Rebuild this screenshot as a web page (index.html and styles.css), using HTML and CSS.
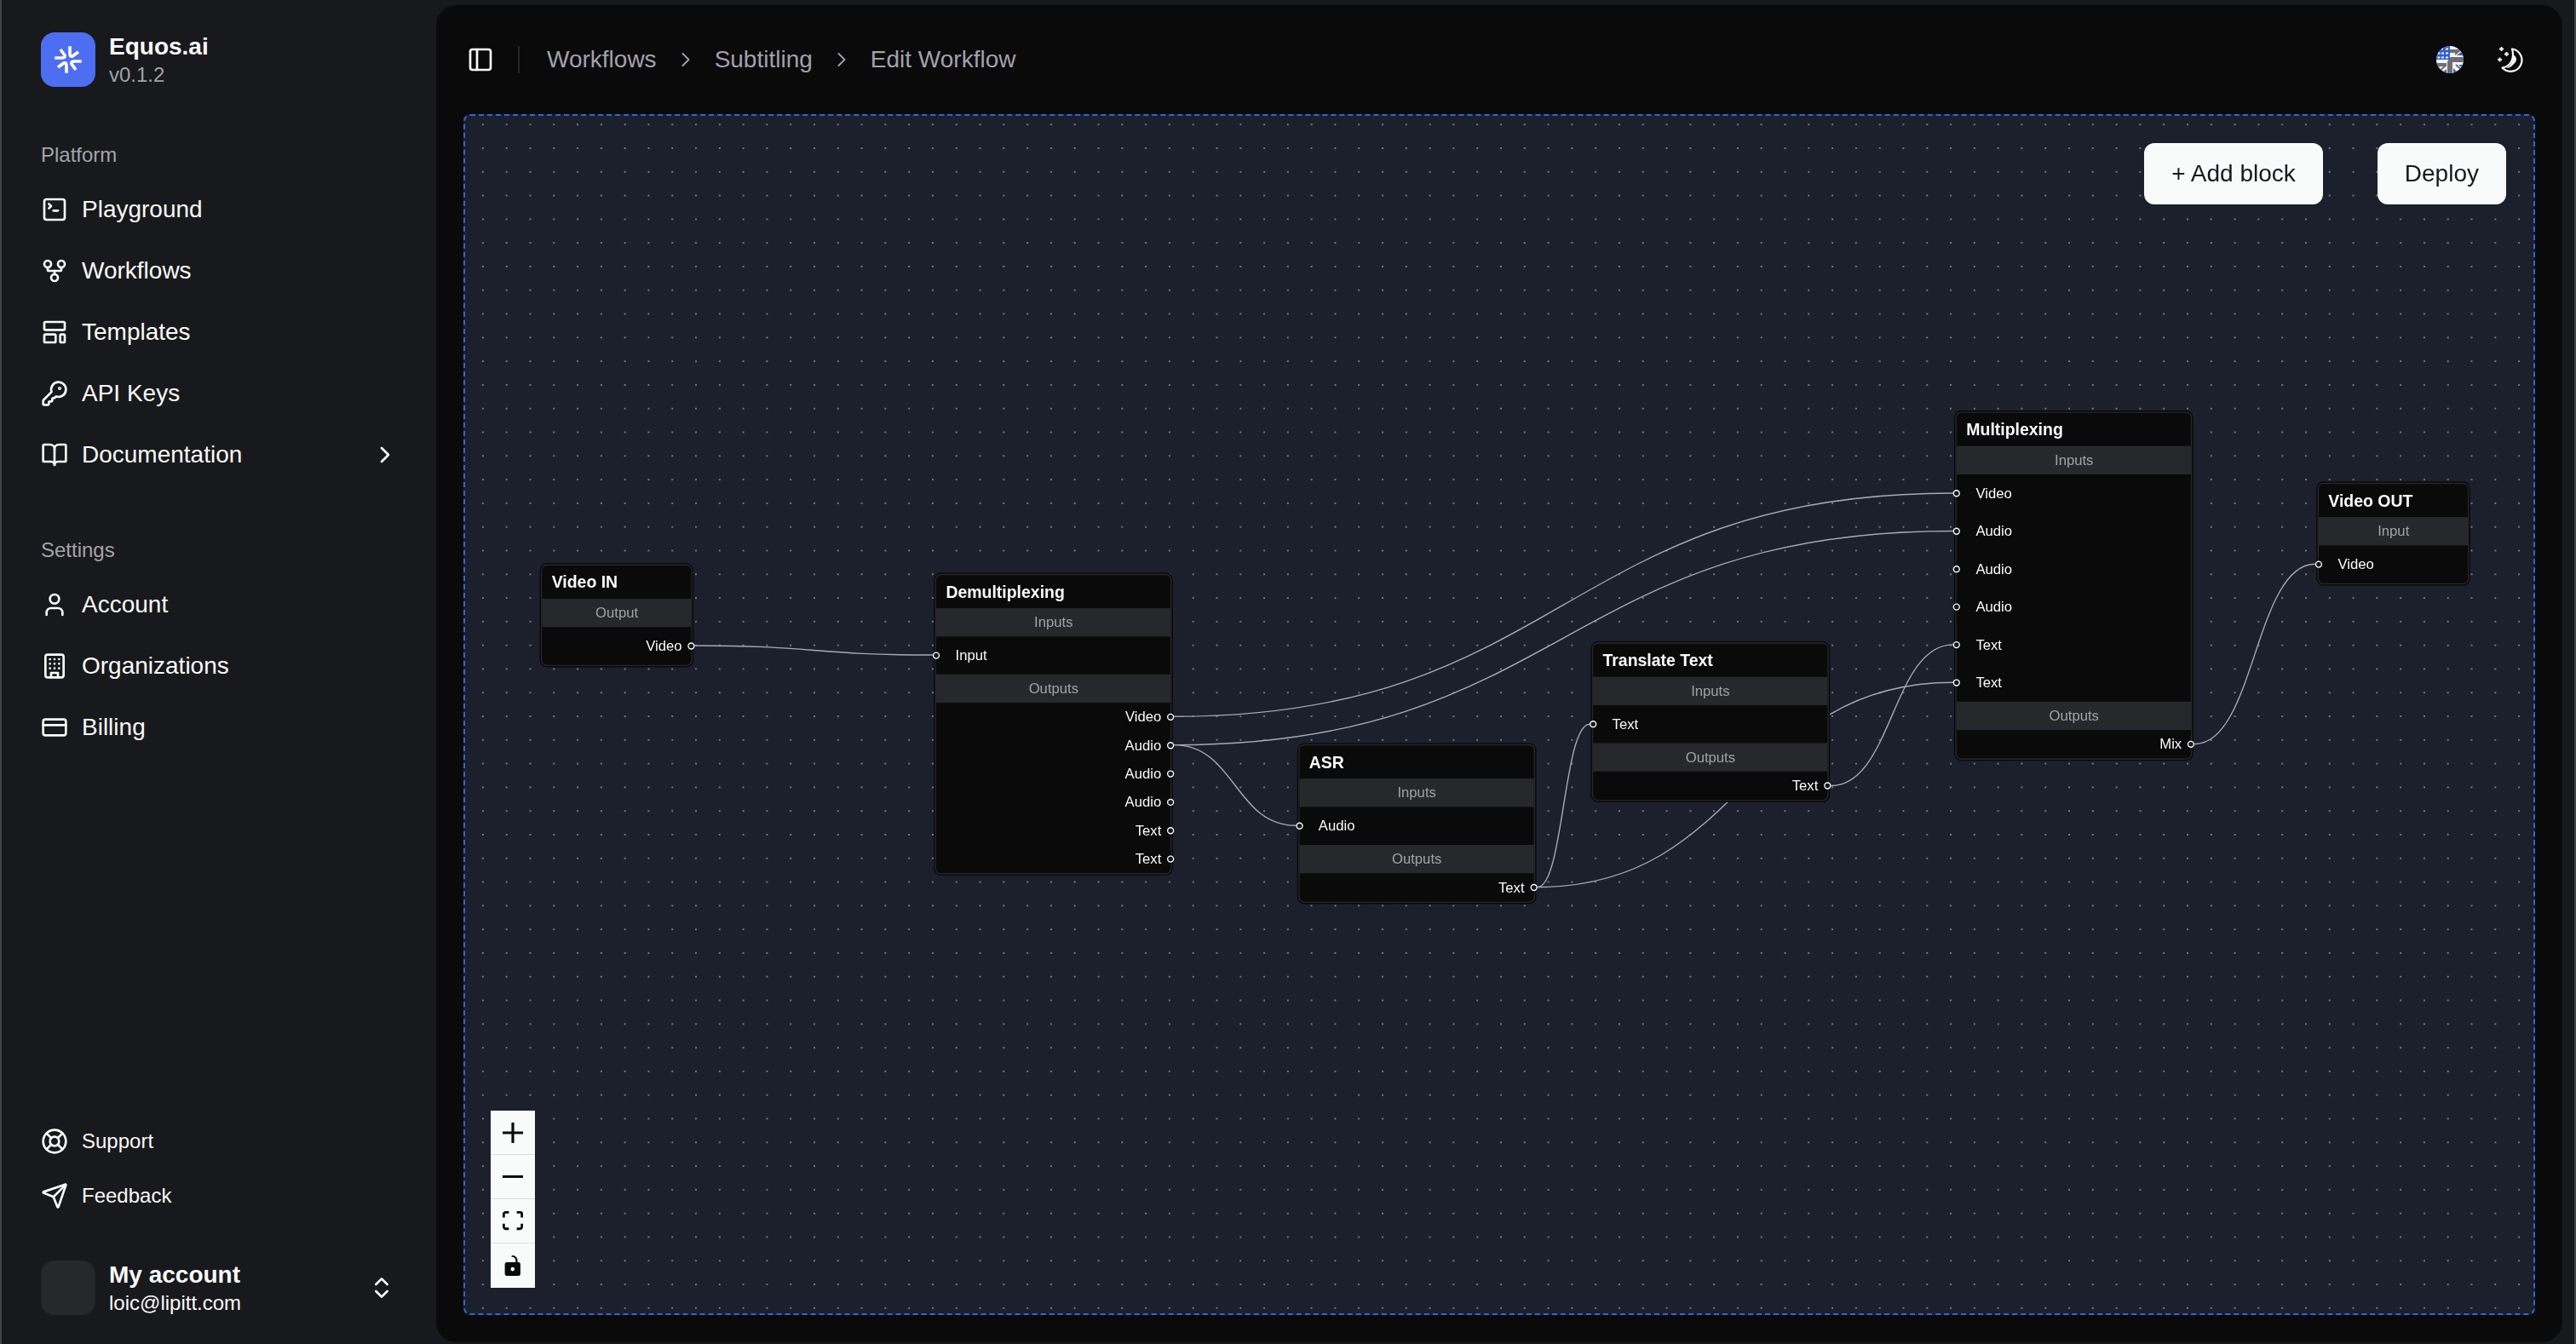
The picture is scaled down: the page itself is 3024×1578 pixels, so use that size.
FILE: index.html
```html
<!DOCTYPE html>
<html lang="en">
<head>
    <meta charset="UTF-8">
    <meta name="viewport" content="width=device-width, initial-scale=1.0">
    <title>Equos.ai - Edit Workflow</title>
    <link rel="stylesheet" href="styles.css">
</head>
<body>
    <div class="app">
        <aside class="sidebar">
            <div class="brand">
                <div class="brand-logo">
                    <svg viewBox="-48 -48 96 96">
                        <path d="M6-47V-22Q6-9 15-12L36-27"/>
                        <path d="M6-47V-22Q6-9 15-12L36-27" transform="rotate(90)"/>
                        <path d="M6-47V-22Q6-9 15-12L36-27" transform="rotate(180)"/>
                        <path d="M6-47V-22Q6-9 15-12L36-27" transform="rotate(270)"/>
                    </svg>
                </div>
                <div class="brand-text">
                    <span class="name">Equos.ai</span>
                    <span class="sub muted">v0.1.2</span>
                </div>
            </div>

            <nav class="nav-group">
                <div class="nav-label">Platform</div>
                <a class="nav-item">
                    <svg class="icon" viewBox="0 0 24 24"><path d="m7 11 2-2-2-2"/><path d="M11 13h4"/><rect x="3" y="3" width="18" height="18" rx="2"/></svg>
                    <span>Playground</span>
                </a>
                <a class="nav-item">
                    <svg class="icon" viewBox="0 0 24 24"><circle cx="12" cy="18" r="3"/><circle cx="6" cy="6" r="3"/><circle cx="18" cy="6" r="3"/><path d="M18 9v2c0 .6-.4 1-1 1H7c-.6 0-1-.4-1-1V9"/><path d="M12 12v3"/></svg>
                    <span>Workflows</span>
                </a>
                <a class="nav-item">
                    <svg class="icon" viewBox="0 0 24 24"><rect x="3" y="3" width="18" height="7" rx="1"/><rect x="3" y="14" width="10" height="7" rx="1"/><rect x="17" y="14" width="4" height="7" rx="1"/></svg>
                    <span>Templates</span>
                </a>
                <a class="nav-item">
                    <svg class="icon" viewBox="0 0 24 24"><path d="M2.586 17.414A2 2 0 0 0 2 18.828V21a1 1 0 0 0 1 1h3a1 1 0 0 0 1-1v-1a1 1 0 0 1 1-1h1a1 1 0 0 0 1-1v-1a1 1 0 0 1 1-1h.172a2 2 0 0 0 1.414-.586l.814-.814a6.5 6.5 0 1 0-4-4z"/><circle cx="16.5" cy="7.5" r=".5" fill="currentColor"/></svg>
                    <span>API Keys</span>
                </a>
                <a class="nav-item">
                    <svg class="icon" viewBox="0 0 24 24"><path d="M12 7v14"/><path d="M3 18a1 1 0 0 1-1-1V4a1 1 0 0 1 1-1h5a4 4 0 0 1 4 4 4 4 0 0 1 4-4h5a1 1 0 0 1 1 1v13a1 1 0 0 1-1 1h-6a3 3 0 0 0-3 3 3 3 0 0 0-3-3z"/></svg>
                    <span>Documentation</span>
                    <svg class="icon nav-more" viewBox="0 0 24 24"><path d="m9 18 6-6-6-6"/></svg>
                </a>
            </nav>

            <nav class="nav-group">
                <div class="nav-label">Settings</div>
                <a class="nav-item">
                    <svg class="icon" viewBox="0 0 24 24"><path d="M19 21v-2a4 4 0 0 0-4-4H9a4 4 0 0 0-4 4v2"/><circle cx="12" cy="7" r="4"/></svg>
                    <span>Account</span>
                </a>
                <a class="nav-item">
                    <svg class="icon" viewBox="0 0 24 24"><rect x="4" y="2" width="16" height="20" rx="2"/><path d="M9 22v-4h6v4"/><path d="M8 6h.01M12 6h.01M16 6h.01M8 10h.01M12 10h.01M16 10h.01M8 14h.01M12 14h.01M16 14h.01"/></svg>
                    <span>Organizations</span>
                </a>
                <a class="nav-item">
                    <svg class="icon" viewBox="0 0 24 24"><rect x="2" y="5" width="20" height="14" rx="2"/><path d="M2 10h20"/></svg>
                    <span>Billing</span>
                </a>
            </nav>

            <nav class="nav-group nav-bottom">
                <a class="nav-item small">
                    <svg class="icon" viewBox="0 0 24 24"><circle cx="12" cy="12" r="10"/><path d="m4.93 4.93 4.24 4.24M14.83 9.17l4.24-4.24M14.83 14.83l4.24 4.24M9.17 14.83l-4.24 4.24"/><circle cx="12" cy="12" r="4"/></svg>
                    <span>Support</span>
                </a>
                <a class="nav-item small">
                    <svg class="icon" viewBox="0 0 24 24"><path d="M14.536 21.686a.5.5 0 0 0 .937-.024l6.5-19a.496.496 0 0 0-.635-.635l-19 6.5a.5.5 0 0 0-.024.937l7.93 3.18a2 2 0 0 1 1.112 1.11z"/><path d="m21.854 2.147-10.94 10.939"/></svg>
                    <span>Feedback</span>
                </a>
            </nav>

            <div class="account">
                <div class="avatar"></div>
                <div class="brand-text">
                    <span class="name">My account</span>
                    <span class="sub">loic@lipitt.com</span>
                </div>
                <svg class="icon" viewBox="0 0 24 24"><path d="m7 15 5 5 5-5"/><path d="m7 9 5-5 5 5"/></svg>
            </div>
        </aside>

        <main class="main">
            <header class="topbar">
                <svg class="icon" viewBox="0 0 24 24"><rect x="3" y="3" width="18" height="18" rx="2"/><path d="M9 3v18"/></svg>
                <div class="divider"></div>
                <div class="breadcrumb">
                    <span>Workflows</span>
                    <svg class="icon" viewBox="0 0 24 24"><path d="m9 18 6-6-6-6"/></svg>
                    <span>Subtitling</span>
                    <svg class="icon" viewBox="0 0 24 24"><path d="m9 18 6-6-6-6"/></svg>
                    <span>Edit Workflow</span>
                </div>
                <div class="topbar-actions">
                    <!-- language -->
                    <svg class="lang" viewBox="0 0 32 32">
                        <clipPath id="flag"><circle cx="16" cy="16" r="16"/></clipPath>
                        <g clip-path="url(#flag)">
                            <rect width="32" height="32" fill="#f4f5f5"/>
                            <path d="M24 11 32 5v6zM0 24h4l-4 4zM6 32l6-5v5zM20 32v-6l6 6zM32 22h-6l6 5z" fill="#315fce"/>
                            <path d="M0 20h12v4H0zM16 4h12l-4 4h-8z" fill="#6e6e73"/>
                            <path d="m4 29 7-6M32 30l-9-8M22 10l8-7" stroke="#6e6e73" stroke-width="2"/>
                            <path d="M13 32V18l4-5h15v6H19v13z" fill="#6e6e73"/>
                            <path d="M0 0h16v16H0z" fill="#315fce"/>
                            <path d="M6 3.500h2M11 3.500h3M1.500 8.500h3M6 8.500h3M11 8.500h3M1.500 13.500h3M6 13.500h3M11 13.500h3" stroke="#f4f5f5" stroke-width="2.200"/>
                        </g>
                    </svg>
                    <!-- theme -->
                    <svg class="theme" viewBox="0 0 32 32">
                        <path d="M19 3.500A13.200 13.200 0 1 1 7.500 25.500C18 24 22 14 19 3.500z" fill="none" stroke="#fafafa" stroke-width="2.200" stroke-linejoin="round"/>
                        <path d="M20 10c4 2 6 7 1 11-3 4-6 5-9 5 6-3 9-9 8-16z" fill="#fafafa"/>
                        <path d="M6.500 1v5M4 3.500h5M12.500 7v5M10 9.500h5M4.500 13.500v5M2 16h5" stroke="#fafafa" stroke-width="1.800"/>
                    </svg>
                </div>
            </header>

            <section class="canvas">
                <svg class="dots">
                    <pattern id="grid" x="7" y="-3.700" width="27.793" height="27.793" patternUnits="userSpaceOnUse">
                        <circle cx="13.900" cy="13.900" r=".95"/>
                    </pattern>
                    <rect width="100%" height="100%" fill="url(#grid)"/>
                </svg>

                <div class="viewport">
                    <svg class="edges">
                        <path d="M194 447.600C294.500 447.600 294.500 455.600 395 455.600"/>
                        <path d="M599 507.600C928 507.600 928 318.800 1257.200 318.800"/>
                        <path d="M599 531.600C928 531.600 928 350.800 1257.200 350.800"/>
                        <path d="M599 531.600C650.500 531.600 650.500 599.700 702 599.700"/>
                        <path d="M906 651.700C928 651.700 928 514 950.100 514"/>
                        <path d="M906 651.700C1081.600 651.700 1081.600 478.800 1257.200 478.800"/>
                        <path d="M1154.100 566C1205.650 566 1205.650 446.800 1257.200 446.800"/>
                        <path d="M1461.200 530.800C1512.100 530.800 1512.100 378.700 1563 378.700"/>
                    </svg>

                    <div class="node narrow" style="left: 64.200px; top: 378.600px">
                        <div class="node-title">Video IN</div>
                        <div class="node-band">Output</div>
                        <div class="port out tall">Video<i></i></div>
                    </div>

                    <div class="node" style="left: 397.200px; top: 386.600px">
                        <div class="node-title">Demultiplexing</div>
                        <div class="node-band">Inputs</div>
                        <div class="port in"><i></i>Input</div>
                        <div class="node-band">Outputs</div>
                        <div class="port out">Video<i></i></div>
                        <div class="port out">Audio<i></i></div>
                        <div class="port out">Audio<i></i></div>
                        <div class="port out">Audio<i></i></div>
                        <div class="port out">Text<i></i></div>
                        <div class="port out">Text<i></i></div>
                    </div>

                    <div class="node" style="left: 704px; top: 530.700px">
                        <div class="node-title">ASR</div>
                        <div class="node-band">Inputs</div>
                        <div class="port in"><i></i>Audio</div>
                        <div class="node-band">Outputs</div>
                        <div class="port out">Text<i></i></div>
                    </div>

                    <div class="node" style="left: 952.100px; top: 445px">
                        <div class="node-title">Translate Text</div>
                        <div class="node-band">Inputs</div>
                        <div class="port in"><i></i>Text</div>
                        <div class="node-band">Outputs</div>
                        <div class="port out">Text<i></i></div>
                    </div>

                    <div class="node" style="left: 1259.300px; top: 249.800px">
                        <div class="node-title">Multiplexing</div>
                        <div class="node-band">Inputs</div>
                        <div class="port in"><i></i>Video</div>
                        <div class="port in"><i></i>Audio</div>
                        <div class="port in"><i></i>Audio</div>
                        <div class="port in"><i></i>Audio</div>
                        <div class="port in"><i></i>Text</div>
                        <div class="port in"><i></i>Text</div>
                        <div class="node-band">Outputs</div>
                        <div class="port out">Mix<i></i></div>
                    </div>

                    <div class="node narrow" style="left: 1565.200px; top: 309.700px">
                        <div class="node-title">Video OUT</div>
                        <div class="node-band">Input</div>
                        <div class="port in"><i></i>Video</div>
                    </div>
                </div>

                <div class="panel-actions">
                    <button class="btn">+ Add block</button>
                    <button class="btn">Deploy</button>
                </div>

                <div class="controls">
                    <button><svg viewBox="0 0 32 32"><path d="M32 18.133H18.133V32h-4.266V18.133H0v-4.266h13.867V0h4.266v13.867H32z"/></svg></button>
                    <button><svg viewBox="0 0 32 5"><path d="M0 0h32v4.200H0z"/></svg></button>
                    <button><svg viewBox="0 0 32 30"><path d="M3.692 4.630c0-.53.4-.938.939-.938h5.215V0H4.708C2.130 0 0 2.054 0 4.630v5.216h3.692V4.631zM27.354 0h-5.200v3.692h5.170c.53 0 .984.4.984.939v5.215H32V4.631A4.624 4.624 0 0027.354 0zm.954 24.830c0 .532-.4.940-.939.940h-5.215v3.768h5.215c2.577 0 4.631-2.130 4.631-4.707v-5.139h-3.692v5.139zm-23.677.940c-.531 0-.939-.4-.939-.940v-5.138H0v5.139c0 2.577 2.130 4.707 4.708 4.707h5.138V25.770H4.631z"/></svg></button>
                    <button><svg viewBox="0 0 25 32"><path d="M21.333 10.667H19.810V7.619C19.810 3.429 16.380 0 12.190 0c-4.114 1.828-1.370 2.133.305 2.438 1.676.305 4.420 2.590 4.420 5.181v3.048H3.047A3.056 3.056 0 000 13.714v15.238A3.056 3.056 0 003.048 32h18.285a3.056 3.056 0 003.048-3.048V13.714a3.056 3.056 0 00-3.048-3.047zM12.190 24.533a3.056 3.056 0 01-3.047-3.047 3.056 3.056 0 013.047-3.048 3.056 3.056 0 013.048 3.048 3.056 3.056 0 01-3.048 3.047z"/></svg></button>
                </div>
            </section>
        </main>
    </div>
</body>
</html>
```

FILE: styles.css
```css
* {
    margin: 0;
    padding: 0;
    box-sizing: border-box;
}

body {
    font-family: 'Liberation Sans', Arial, sans-serif;
    font-size: 28px;
    color: #fafafa;
    background: #18191c;
    overflow: hidden;
}

.app {
    display: flex;
    height: 100vh;
    border-left: 2px solid #44444f;
    border-right: 2px solid #44444f;
}

.icon {
    width: 32px;
    height: 32px;
    flex-shrink: 0;
    fill: none;
    stroke: currentColor;
    stroke-width: 2;
    stroke-linecap: round;
    stroke-linejoin: round;
}

/* Sidebar */
.sidebar {
    width: 510px;
    flex-shrink: 0;
    display: flex;
    flex-direction: column;
    padding: 38px 46px 34px;
}

.brand,
.account {
    display: flex;
    align-items: center;
    gap: 16px;
    height: 64px;
}

.brand {
    margin-bottom: 48px;
}

.brand-logo,
.avatar {
    width: 64px;
    height: 64px;
    border-radius: 16px;
    flex-shrink: 0;
}

.brand-logo {
    display: flex;
    align-items: center;
    justify-content: center;
    background: #4e6ef2;
}

.brand-logo svg {
    width: 32px;
    height: 32px;
    fill: none;
    stroke: #fafafa;
    stroke-width: 11;
}

.avatar {
    background: #27282b;
}

.brand-text {
    display: flex;
    flex-direction: column;
}

.name {
    font-weight: bold;
    line-height: 33px;
    padding-bottom: 2px;
}

.sub {
    font-size: 24px;
    line-height: 30px;
}

.muted {
    color: #a1a1aa;
}

.nav-group {
    display: flex;
    flex-direction: column;
    gap: 8px;
    margin-bottom: 48px;
}

.nav-label {
    height: 64px;
    line-height: 64px;
    margin-bottom: -8px;
    font-size: 24px;
    color: #a3a3aa;
}

.nav-item {
    display: flex;
    align-items: center;
    gap: 16px;
    height: 64px;
}

.nav-item.small {
    font-size: 24px;
}

.nav-more {
    margin-left: auto;
    margin-right: -2px;
}

.nav-bottom {
    gap: 0;
    margin-top: auto;
    margin-bottom: 44px;
}

.account .icon {
    margin-left: auto;
    margin-right: 2px;
}

/* Main */
.main {
    flex: 1;
    display: flex;
    flex-direction: column;
    margin: 6px 14px 2px 0;
    padding: 0 32px 32px;
    background: #0a0a0b;
    border-radius: 24px;
}

.topbar {
    display: flex;
    align-items: center;
    height: 128px;
    padding-left: 4px;
}

.divider {
    width: 2px;
    height: 32px;
    margin: 0 32px 0 28px;
    background: #27272a;
}

.breadcrumb {
    display: flex;
    align-items: center;
    gap: 20px;
    color: #a1a1aa;
}

.breadcrumb .icon {
    width: 28px;
    height: 28px;
    stroke-width: 1.6;
}

.topbar-actions {
    display: flex;
    align-items: center;
    gap: 38px;
    margin-left: auto;
    margin-right: 14px;
}

.lang,
.theme {
    width: 32px;
    height: 32px;
}

/* Flow canvas */
.canvas {
    flex: 1;
    position: relative;
    overflow: hidden;
    display: flex;
    flex-direction: column;
    justify-content: space-between;
    padding: 32px 32px 30px 30px;
    background: #1c202c;
    border: 2px dashed #3563d9;
    border-radius: 8px;
}

.dots {
    position: absolute;
    top: 0;
    left: 0;
    width: 100%;
    height: 100%;
    fill: #9a9aa2;
}

.viewport {
    position: absolute;
    top: 0;
    left: 0;
    transform: scale(1.3895);
    transform-origin: 0 0;
}

.edges {
    position: absolute;
    width: 1px;
    height: 1px;
    overflow: visible;
    fill: none;
    stroke: #a9a9af;
    stroke-width: 1;
}

.node {
    position: absolute;
    width: 200px;
    font-size: 12px;
    background: #0a0a0b;
    border: 1px solid #27272a;
    border-radius: 5px;
    box-shadow: 0 0 0 1px #08080a;
}

.node.narrow {
    width: 128px;
}

.node-title {
    height: 28px;
    line-height: 28px;
    padding-left: 8px;
    font-size: 14px;
    font-weight: bold;
}

.node-band {
    height: 24px;
    line-height: 24px;
    text-align: center;
    color: #a1a1aa;
    background: #27282b;
}

.port {
    position: relative;
    height: 24px;
    line-height: 24px;
}

.port.in {
    height: 32px;
    line-height: 32px;
    padding-left: 16px;
}

.port.out {
    padding-right: 8px;
    text-align: right;
}

.port.tall {
    height: 32px;
    line-height: 32px;
}

.port i {
    position: absolute;
    top: 50%;
    width: 6px;
    height: 6px;
    margin-top: -3px;
    background: #151821;
    border: 1px solid #fafafa;
    border-radius: 50%;
}

.port.in i {
    left: -3px;
}

.port.out i {
    right: -3px;
}

.panel-actions {
    position: relative;
    display: flex;
    justify-content: flex-end;
    gap: 64px;
}

.btn {
    height: 72px;
    padding: 0 32px;
    font: inherit;
    color: #18191c;
    background: #f9fafa;
    border: none;
    border-radius: 12px;
}

.controls {
    position: relative;
    width: 52px;
}

.controls button {
    display: flex;
    align-items: center;
    justify-content: center;
    width: 52px;
    height: 52px;
    background: #f9fafa;
    border: none;
    border-bottom: 1px solid #dcdddd;
}

.controls button:last-child {
    border-bottom: none;
}

.controls svg {
    width: 24px;
    max-height: 24px;
    fill: #0a0a0b;
}
```
